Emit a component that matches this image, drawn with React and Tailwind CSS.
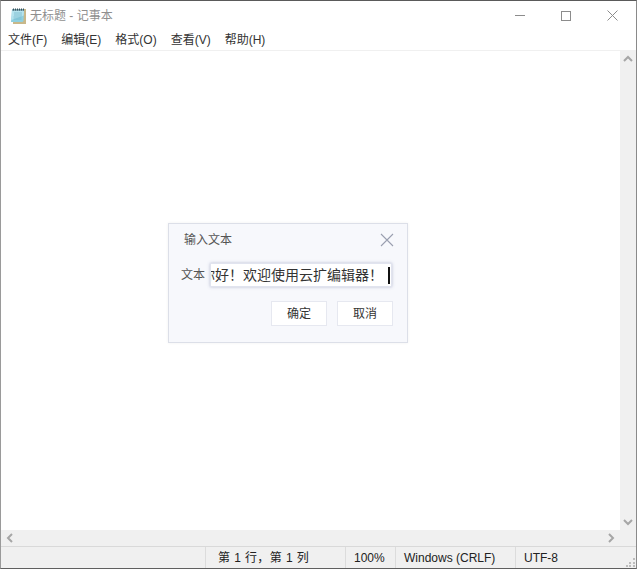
import React from "react";

const Cjk = "font-['Liberation_Sans','Noto_Sans_CJK_SC',sans-serif]";

function NotepadIcon() {
  return (
    <svg width="16" height="18" viewBox="0 0 16 18" className="shrink-0">
      <rect x="3" y="2" width="13" height="15" fill="#c8b88a" />
      <path d="M2 2.5h12l-.5 11.5-1 1H1z" fill="#8fd0e0" />
      <path d="M2 2.5h12l-.3 6L1.5 13z" fill="#b5e3ee" />
      <path d="M2 2.5h12v1H2z" fill="#5b7f8c" />
      <path d="M3 1.5h1v2H3zM5 1.5h1v2H5zM7 1.5h1v2H7zM9 1.5h1v2H9zM11 1.5h1v2h-1zM13 1.5h1v2h-1z" fill="#33505c" />
      <path d="M4 6h8M4 8h8M3.500 10h8M3.500 12h8" stroke="#6fb3c6" strokeWidth="0.7" />
    </svg>
  );
}

function Menu({ children }) {
  return <span className="text-[12px] leading-[20px] text-[#333333]">{children}</span>;
}

function Chevron({ d }) {
  return (
    <svg width="10" height="10" viewBox="0 0 10 10">
      <path d={d} fill="none" stroke="#a6a6a6" strokeWidth="2" />
    </svg>
  );
}

export default function App() {
  return (
    <div className={`${Cjk} relative flex h-[569px] w-[637px] flex-col overflow-hidden border border-t-[#5a5a5a] border-r-[#8a8a8a] border-b-[#5f5f5f] border-l-[#9a9a9a] bg-white`}>
      <div className="flex h-[29px] shrink-0 items-center">
        <div className="ml-[9px] flex items-center gap-[4px]">
          <NotepadIcon />
          <span className="text-[12px] text-[#8f8f8f]">无标题 - 记事本</span>
        </div>
        <div className="ml-auto flex items-center pr-[1px]">
          <div className="flex w-[46px] justify-center">
            <div className="h-px w-[10px] bg-[#8c8c8c]" />
          </div>
          <div className="flex w-[46px] justify-center">
            <div className="h-[10px] w-[10px] border border-[#8c8c8c]" />
          </div>
          <div className="flex w-[46px] justify-center">
            <svg width="11" height="11" viewBox="0 0 11 11">
              <path d="M.5.500l10 10M10.500.500l-10 10" stroke="#8c8c8c" strokeWidth="1" />
            </svg>
          </div>
        </div>
      </div>

      <div className="flex h-[20px] shrink-0 items-center gap-[14px] pl-[7px]">
        <Menu>文件(F)</Menu>
        <Menu>编辑(E)</Menu>
        <Menu>格式(O)</Menu>
        <Menu>查看(V)</Menu>
        <Menu>帮助(H)</Menu>
      </div>
      <div className="h-px shrink-0 bg-[#f0f0f0]" />

      <div className="flex min-h-0 flex-1">
        <div className="flex-1 bg-white" />
        <div className="flex w-[16px] flex-col items-center justify-between bg-[#f0f0f0] py-[3px]">
          <Chevron d="M1 7l4-4 4 4" />
          <Chevron d="M1 3l4 4 4-4" />
        </div>
      </div>

      <div className="flex h-[16px] shrink-0 items-center justify-between bg-[#f0f0f0] pl-[4px] pr-[20px]">
        <Chevron d="M7 1L3 5l4 4" />
        <Chevron d="M3 1l4 4-4 4" />
      </div>

      <div className="flex h-[22px] shrink-0 items-center border-t border-[#d9d9d9] bg-[#f0f0f0] text-[12px] text-[#222222]">
        <div className="w-[204px]" />
        <div className="flex h-full w-[140px] items-center border-l border-[#dcdcdc] pl-[12px] tracking-[0.4px]">第 1 行，第 1 列</div>
        <div className="flex h-full w-[50px] items-center border-l border-[#dcdcdc] pl-[8px]">100%</div>
        <div className="flex h-full w-[120px] items-center border-l border-[#dcdcdc] pl-[8px]">Windows (CRLF)</div>
        <div className="flex h-full items-center border-l border-[#dcdcdc] pl-[8px]">UTF-8</div>
      </div>

      <div className="absolute left-[167px] top-[222px] flex h-[120px] w-[240px] flex-col border border-[#dcdfe8] bg-[#f7f8fc] shadow-[0_0_3px_rgba(0,0,0,0.06)]">
        <div className="flex h-[30px] items-center pl-[15px] pr-[13px] pt-[2px]">
          <span className="text-[12px] text-[#555555]">输入文本</span>
          <svg width="14" height="14" viewBox="0 0 14 14" className="ml-auto">
            <path d="M1 1l12 12M13 1L1 13" stroke="#9a9fb0" strokeWidth="1.1" />
          </svg>
        </div>
        <div className="mt-[9px] flex items-center pl-[12px]">
          <span className="text-[12px] text-[#555555]">文本</span>
          <div className="ml-[5px] flex h-[24px] w-[182px] items-center justify-end overflow-hidden border border-[#e1e4ef] bg-white pr-[1px] shadow-[0_0_3px_rgba(80,90,140,0.35)]">
            <span className="whitespace-nowrap text-[14px] text-[#333333]">你好！欢迎使用云扩编辑器！</span>
            <span className="ml-[5px] h-[17px] w-[2px] shrink-0 bg-[#111111]" />
          </div>
        </div>
        <div className="mt-[14px] flex justify-end gap-[10px] pr-[14px]">
          <button className="h-[25px] w-[56px] border border-[#e6e8f0] bg-white text-[12px] text-[#333333]">确定</button>
          <button className="h-[25px] w-[56px] border border-[#e6e8f0] bg-white text-[12px] text-[#333333]">取消</button>
        </div>
      </div>

      <svg width="12" height="12" viewBox="0 0 12 12" className="absolute bottom-0 right-0">
        <path d="M9 2h2v2H9zM9 6h2v2H9zM5 6h2v2H5zM9 9h2v2H9zM5 9h2v2H5zM2 9h2v2H2z" fill="#bdbdbd" />
      </svg>
    </div>
  );
}
